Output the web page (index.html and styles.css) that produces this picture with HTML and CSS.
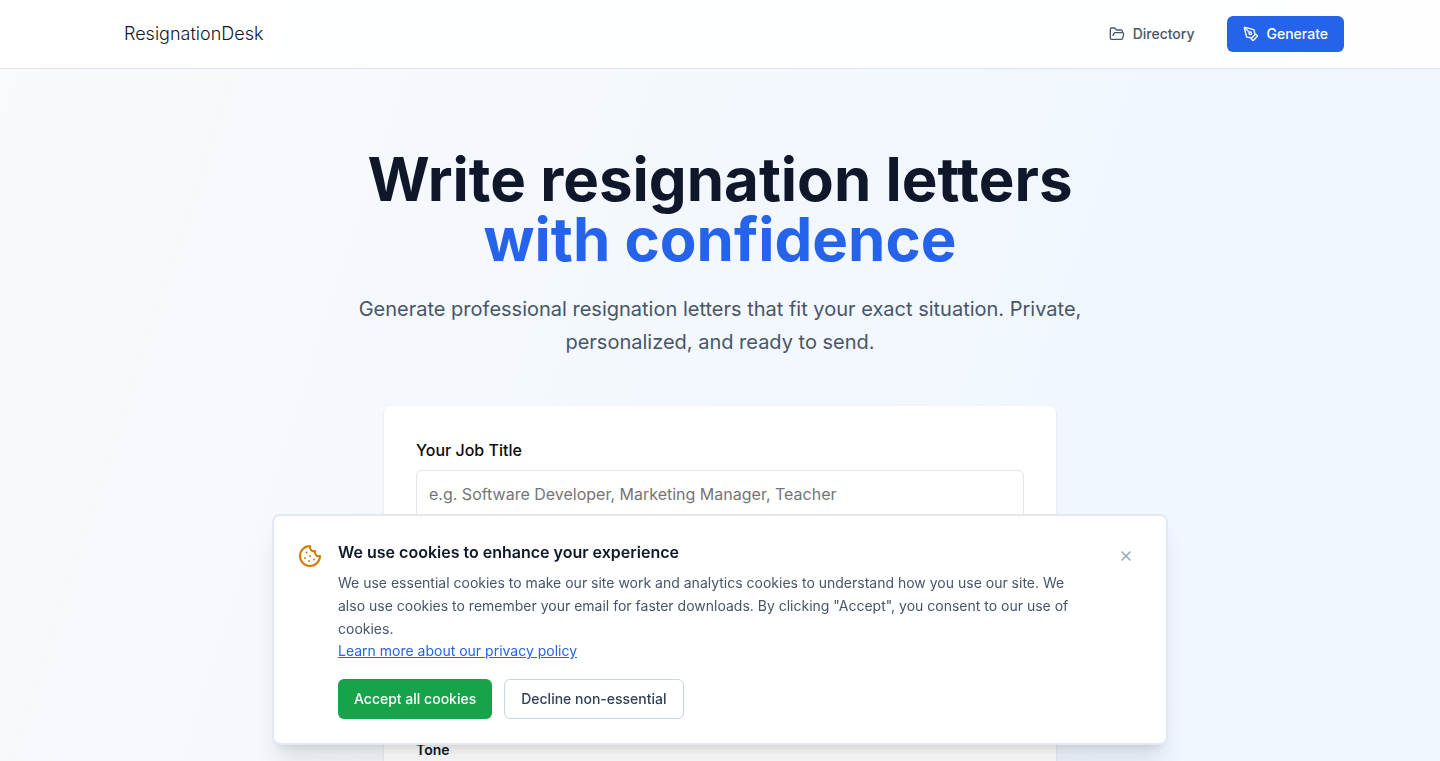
FILE: index.html
```html
<!DOCTYPE html>
<html lang="en">
<head>
<meta charset="utf-8">
<meta name="viewport" content="width=device-width, initial-scale=1">
<title>ResignationDesk</title>
<link rel="stylesheet" href="styles.css">
</head>
<body class="page">
<header class="header">
  <nav class="nav">
    <a class="brand" href="#">ResignationDesk</a>
    <div class="nav-links">
      <a class="nav-link" href="#directory">
        <svg class="icon" viewBox="0 0 24 24" aria-hidden="true"><path d="m6 14 1.5-2.9A2 2 0 0 1 9.24 10H20a2 2 0 0 1 1.94 2.5l-1.54 6a2 2 0 0 1-1.95 1.5H4a2 2 0 0 1-2-2V5a2 2 0 0 1 2-2h3.9a2 2 0 0 1 1.69.9l.81 1.2a2 2 0 0 0 1.67.9H18a2 2 0 0 1 2 2v2"/></svg>
        Directory
      </a>
      <a class="nav-link nav-cta" href="#generate">
        <svg class="icon" viewBox="0 0 24 24" aria-hidden="true"><path d="M15.707 21.293a1 1 0 0 1-1.414 0l-1.586-1.586a1 1 0 0 1 0-1.414l5.586-5.586a1 1 0 0 1 1.414 0l1.586 1.586a1 1 0 0 1 0 1.414z"/><path d="m18 13-1.375-6.874a1 1 0 0 0-.746-.776L3.235 2.028a1 1 0 0 0-1.207 1.207L5.35 15.879a1 1 0 0 0 .776.746L13 18"/><path d="m2.3 2.3 7.286 7.286"/><circle cx="11" cy="11" r="2"/></svg>
        Generate
      </a>
    </div>
  </nav>
</header>
<main class="hero">
  <h1 class="title">Write resignation letters <span class="title-accent">with confidence</span></h1>
  <p class="subtitle">Generate professional resignation letters that fit your exact situation. Private, personalized, and ready to send.</p>
  <form class="card" id="generate">
    <label class="label" for="job">Your Job Title</label>
    <input class="input" id="job" type="text" placeholder="e.g. Software Developer, Marketing Manager, Teacher">
    <p class="group-label">Tone</p>
  </form>
</main>
<section class="cookie" aria-labelledby="cookie-title">
  <svg class="cookie-icon" viewBox="0 0 24 24" aria-hidden="true"><path d="M12 2a10 10 0 1 0 10 10 4 4 0 0 1-5-5 4 4 0 0 1-5-5"/><path d="M8.5 8.5v.01"/><path d="M16 15.5v.01"/><path d="M12 12v.01"/><path d="M11 17v.01"/><path d="M7 14v.01"/></svg>
  <div class="cookie-body">
    <h2 class="cookie-title" id="cookie-title">We use cookies to enhance your experience</h2>
    <p class="cookie-text">We use essential cookies to make our site work and analytics cookies to understand how you use our site. We also use cookies to remember your email for faster downloads. By clicking "Accept", you consent to our use of cookies.</p>
    <a class="cookie-link" href="#privacy">Learn more about our privacy policy</a>
    <div class="cookie-actions">
      <button class="button button-accept" type="button">Accept all cookies</button>
      <button class="button button-decline" type="button">Decline non-essential</button>
    </div>
  </div>
  <button class="close" type="button" aria-label="Close">
    <svg class="icon" viewBox="0 0 24 24" aria-hidden="true"><path d="M18 6 6 18"/><path d="m6 6 12 12"/></svg>
  </button>
</section>
</body>
</html>
```
FILE: styles.css
```css
*, *::before, *::after { box-sizing: border-box; }
h1, h2, p { margin: 0; }
button, input { font: inherit; }

.page {
  margin: 0;
  height: 100vh;
  overflow: hidden;
  font-family: Inter, "Liberation Sans", sans-serif;
  font-size: 16px;
  line-height: 24px;
  color: #0f172a;
  background: linear-gradient(108deg, #f8fafc 0%, #eff6ff 92%);
}
.icon {
  width: 16px;
  height: 16px;
  fill: none;
  stroke: currentColor;
  stroke-width: 2;
  stroke-linecap: round;
  stroke-linejoin: round;
}

.header {
  background: rgba(255, 255, 255, 0.9);
  border-bottom: 1px solid #e5e5e5;
}
.nav {
  display: flex;
  align-items: center;
  justify-content: space-between;
  max-width: 1280px;
  margin: 0 auto;
  padding: 16px 16px 16px 44px;
}
.brand {
  font-size: 18px;
  font-weight: 300;
  line-height: 28px;
  color: #0f172a;
  text-decoration: none;
}
.nav-links { display: flex; gap: 16px; }
.nav-link {
  display: flex;
  align-items: center;
  gap: 8px;
  height: 36px;
  padding: 0 16px;
  border-radius: 6px;
  font-size: 14px;
  font-weight: 500;
  color: #475569;
  text-decoration: none;
}
.nav-cta { background: #2563eb; color: #fff; }

.hero {
  max-width: 768px;
  margin: 0 auto;
  padding: 80px 16px 0;
  text-align: center;
}
.title {
  font-size: 60px;
  font-weight: 700;
  line-height: 60px;
}
.title-accent { display: block; color: #2563eb; }
.subtitle {
  margin-top: 24px;
  font-size: 20px;
  line-height: 33px;
  color: #475569;
}
.card {
  display: flex;
  flex-direction: column;
  max-width: 672px;
  margin: 47px auto 0;
  padding: 32px;
  border-radius: 8px;
  background: rgba(255, 255, 255, 0.95);
  box-shadow: 0 1px 3px rgba(0, 0, 0, 0.1);
  text-align: left;
}
.label { font-weight: 500; color: #0a0a0a; }
.input {
  height: 48px;
  margin-top: 8px;
  padding: 0 12px;
  border: 1px solid #e5e5e5;
  border-radius: 6px;
  background: #fff;
}
.input::placeholder { color: #757575; }
.group-label {
  margin-top: 222px;
  font-size: 14px;
  font-weight: 600;
  line-height: 20px;
}

.cookie {
  position: fixed;
  right: 16px;
  bottom: 16px;
  left: 16px;
  display: flex;
  align-items: flex-start;
  gap: 16px;
  max-width: 896px;
  margin: 0 auto;
  padding: 24px;
  border: 2px solid #e2e8f0;
  border-radius: 8px;
  background: #fff;
  box-shadow: 0 20px 25px -5px rgba(0, 0, 0, 0.1), 0 8px 10px -6px rgba(0, 0, 0, 0.1);
}
.cookie-icon {
  flex: none;
  width: 24px;
  height: 24px;
  margin-top: 4px;
  fill: none;
  stroke: #d97706;
  stroke-width: 2;
  stroke-linecap: round;
  stroke-linejoin: round;
}
.cookie-body { flex: 1; }
.cookie-title { font-size: 16px; font-weight: 600; line-height: 24px; }
.cookie-text {
  margin-top: 7px;
  font-size: 14px;
  line-height: 23px;
  color: #475569;
}
.cookie-link {
  display: block;
  width: fit-content;
  font-size: 14px;
  line-height: 22px;
  color: #2563eb;
  text-decoration: underline;
}
.cookie-actions { display: flex; gap: 12px; margin-top: 17px; }
.button {
  height: 40px;
  padding: 0 16px;
  border: 0;
  border-radius: 6px;
  font-size: 14px;
  font-weight: 500;
}
.button-accept { background: #16a34a; color: #fff; }
.button-decline { border: 1px solid #cbd5e1; background: #fff; color: #334155; }
.close {
  display: grid;
  place-items: center;
  width: 32px;
  height: 32px;
  padding: 0;
  border: 0;
  background: none;
  color: #94a3b8;
}
```
